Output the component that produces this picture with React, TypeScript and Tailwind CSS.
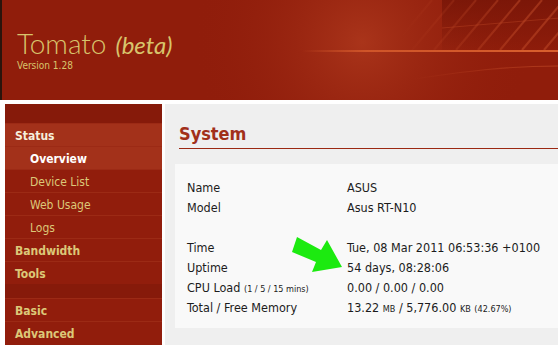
import React from "react";

const UI_FONT = "font-['DejaVu_Sans_Condensed','DejaVu_Sans',Tahoma,sans-serif]";

type MenuItem = { label: string; sub?: boolean; active?: boolean; gold?: boolean };

const topMenu: MenuItem[] = [
  { label: "Status", active: true },
  { label: "Overview", sub: true, active: true },
  { label: "Device List", sub: true },
  { label: "Web Usage", sub: true },
  { label: "Logs", sub: true },
  { label: "Bandwidth", gold: true },
  { label: "Tools", gold: true },
];

const bottomMenu: MenuItem[] = [
  { label: "Basic", gold: true },
  { label: "Advanced", gold: true },
];

function MenuRow({ item }: { item: MenuItem }) {
  return (
    <div
      className={
        "h-[23px] flex items-center border-t border-[#9c2a15] text-[12px] leading-none pt-[1px] " +
        (item.active ? "bg-[#a3311a] " : "") +
        (item.sub ? "pl-[25px] " : "pl-[10px] font-bold ") +
        (item.sub && item.active ? "text-white font-bold" : item.active ? "text-[#f6eedc]" : "text-[#dcc878]")
      }
    >
      {item.label}
    </div>
  );
}

function HeaderArt() {
  return (
    <svg className="absolute inset-0" width="558" height="100" viewBox="0 0 558 100">
      <defs>
        <radialGradient id="glow" cx="360" cy="42" r="170" gradientUnits="userSpaceOnUse">
          <stop offset="0" stopColor="#b03a1e" stopOpacity="0.8" />
          <stop offset="1" stopColor="#901d0b" stopOpacity="0" />
        </radialGradient>
        <linearGradient id="line" x1="300" y1="0" x2="558" y2="0" gradientUnits="userSpaceOnUse">
          <stop offset="0" stopColor="#d4592b" stopOpacity="0" />
          <stop offset="0.25" stopColor="#d4592b" stopOpacity="0.9" />
          <stop offset="1" stopColor="#d9602e" />
        </linearGradient>
        <linearGradient id="curve" x1="410" y1="0" x2="558" y2="0" gradientUnits="userSpaceOnUse">
          <stop offset="0" stopColor="#c8502a" stopOpacity="0" />
          <stop offset="1" stopColor="#c8502a" stopOpacity="0.6" />
        </linearGradient>
        <linearGradient id="dark" x1="0" y1="0" x2="0" y2="50" gradientUnits="userSpaceOnUse">
          <stop offset="0" stopColor="#761507" stopOpacity="0.8" />
          <stop offset="1" stopColor="#761507" stopOpacity="0.1" />
        </linearGradient>
        <linearGradient id="fade" x1="400" y1="0" x2="520" y2="0" gradientUnits="userSpaceOnUse">
          <stop offset="0" stopColor="#c9512c" stopOpacity="0" />
          <stop offset="1" stopColor="#c9512c" stopOpacity="0.45" />
        </linearGradient>
      </defs>
      <rect x="0" y="0" width="558" height="100" fill="url(#glow)" />
      <rect x="440" y="0" width="118" height="50" fill="url(#dark)" />
      <g stroke="url(#fade)" strokeWidth="2">
        {[430, 452, 474, 496, 518, 540, 562, 584, 606].map((x) => (
          <line key={x} x1={x} y1="0" x2={x - 42} y2="50" />
        ))}
      </g>
      <line x1="440" y1="28" x2="558" y2="18" stroke="#c9512c" strokeOpacity="0.35" strokeWidth="1" />
      <rect x="300" y="50" width="258" height="2" fill="url(#line)" />
      <path d="M412 79 C 460 72, 500 66, 558 66" stroke="url(#curve)" strokeWidth="1.2" fill="none" />
    </svg>
  );
}

function Row({ label, value }: { label: React.ReactNode; value: React.ReactNode }) {
  return (
    <div className="h-[20px] flex items-center text-[12.5px] text-[#1c1c1c]">
      <div className="w-[172px] pl-[12px]">{label}</div>
      <div>{value}</div>
    </div>
  );
}

export default function App() {
  return (
    <div className={"relative w-[558px] h-[345px] overflow-hidden bg-white " + UI_FONT}>
      <div className="relative h-[100px] bg-[#901d0b] border-l-2 border-[#2b140c]">
        <HeaderArt />
        <div className="absolute left-[15px] top-[29px] text-[#d8c46c]">
          <div className="flex items-baseline gap-[9px] font-['Lato',sans-serif]">
            <span className="text-[28px] font-light leading-none">Tomato</span>
            <span className="text-[24px] italic leading-none">(beta)</span>
          </div>
          <div className="text-[10px] mt-[4px] leading-none">Version 1.28</div>
        </div>
      </div>

      <div className="flex mt-[4px] gap-[3px] pl-[5px]">
        <div className="w-[157px] shrink-0 bg-[#911d0c]">
          <div className="h-[19px] bg-[#861a0a]" />
          {topMenu.map((m) => (
            <MenuRow key={m.label} item={m} />
          ))}
          <div className="h-[14px] bg-[#861a0a]" />
          {bottomMenu.map((m) => (
            <MenuRow key={m.label} item={m} />
          ))}
        </div>

        <div className="flex-1 bg-[#efefef] h-[241px] pl-[10px]">
          <div className="ml-[4px] mt-[19px] pb-[3px] border-b border-[#9b2812] text-[18px] font-bold text-[#a1301a] leading-[22px]">
            System
          </div>
          <div className="mt-[15px] h-[164px] bg-[#f9f9f9] pt-[14px]">
            <Row label="Name" value="ASUS" />
            <Row label="Model" value="Asus RT-N10" />
            <div className="h-[20px]" />
            <Row label="Time" value="Tue, 08 Mar 2011 06:53:36 +0100" />
            <Row label="Uptime" value="54 days, 08:28:06" />
            <Row
              label={
                <>
                  CPU Load <span className="text-[9px]">(1 / 5 / 15 mins)</span>
                </>
              }
              value="0.00 / 0.00 / 0.00"
            />
            <Row
              label="Total / Free Memory"
              value={
                <>
                  13.22 <span className="text-[9px]">MB</span> / 5,776.00 <span className="text-[9px]">KB</span>{" "}
                  <span className="text-[9px]">(42.67%)</span>
                </>
              }
            />
          </div>
        </div>
      </div>

      <svg className="absolute left-0 top-0 pointer-events-none" width="558" height="345">
        <polygon points="297,237 321,250 327,240 342,267 312,272 316,262 292,252" fill="#1cea10" />
      </svg>
    </div>
  );
}
